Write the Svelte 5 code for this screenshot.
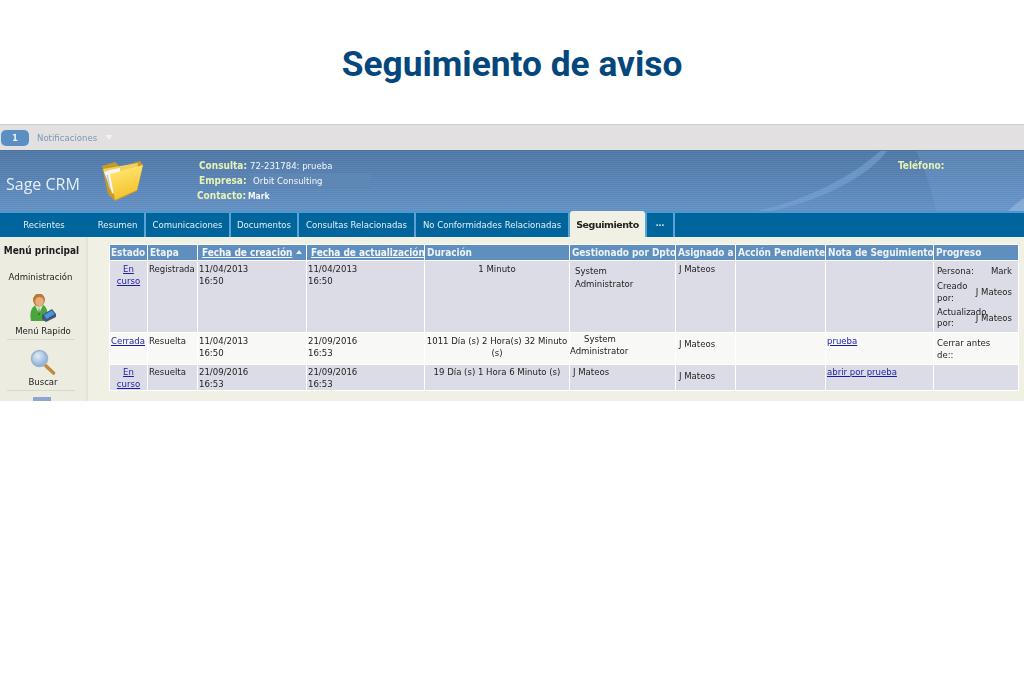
<script>
  const tabs = ['Resumen','Comunicaciones','Documentos','Consultas Relacionadas','No Conformidades Relacionadas'];
  const tabWidths = [53,83,66,115,152];
</script>

<div class="page">
  <h1>Seguimiento de aviso</h1>
  <div class="crm">
    <div class="notif">
      <span class="badge">1</span>
      <span class="nlabel">Notificaciones</span>
      <span class="caret"></span>
    </div>
    <header>
      <svg class="swoosh" viewBox="0 0 1024 61" preserveAspectRatio="none" aria-hidden="true">
        <path d="M880 0 C850 28 805 50 757 61 L772 61 C822 50 868 26 887 0 Z" fill="#7ba5d6" opacity=".55"/>
        <path d="M916 0 C926 20 932 42 936 61 L1024 61 L1024 0 Z" fill="#7ba5d6" opacity=".28"/>
        <path d="M1008 61 C1014 55 1019 51 1024 48 L1024 61 Z" fill="#a8c6e8" opacity=".45"/>
      </svg>
      <div class="brand">Sage CRM</div>
      <svg class="folder" viewBox="0 0 44 42" aria-hidden="true">
        <defs>
          <linearGradient id="fy" x1="0.3" y1="0" x2="0.6" y2="1">
            <stop offset="0" stop-color="#ffe878"/>
            <stop offset="1" stop-color="#f5be22"/>
          </linearGradient>
        </defs>
        <path d="M2 6 L15 2 L20 7 L40 1 L43 5 L37 31 L15 41 L8 34 Z" fill="#c79a28"/>
        <path d="M3 9 L38 3 L36 20 L12 34 Z" fill="#f0d060"/>
        <path d="M4 12 L10 10 L20 8 L20 20 L13 34 Z" fill="#f6f6f0"/>
        <path d="M7 15 L10 28" stroke="#c8ccd6" stroke-width="1.5" fill="none"/>
        <path d="M10 14 L43 5 L37 30 L15 40 Z" fill="url(#fy)"/>
      </svg>
      <div class="info">
        <div class="line"><b>Consulta:</b><span>72-231784: prueba</span></div>
        <div class="line"><b>Empresa:</b><span class="shade">Orbit Consulting</span></div>
        <div class="line l3"><b>Contacto:</b><span class="small">Mark</span></div>
      </div>
      <b class="phone">Teléfono:</b>
    </header>
    <nav>
      <div class="tab recent">Recientes</div>
      <div class="tabset">
        {#each tabs as t, i}
          <div class="tab" style="width:{tabWidths[i]}px">{t}</div>
        {/each}
        <div class="tab active">Seguimiento</div>
        <div class="tab more">•••</div>
        <div class="tab rest"></div>
      </div>
    </nav>
    <div class="body">
      <aside>
        <div class="mtitle">Menú principal</div>
        <div class="admin">Administración</div>
        <svg class="ic person" viewBox="0 0 28 28" aria-hidden="true">
          <path d="M3 27 C1 17 4 11 11 10 C18 10 20 15 20 27 Z" fill="#4aa53a"/>
          <path d="M7 11 L11 20 L15 11 Z" fill="#d8e8c8"/>
          <path d="M11 13 L12 21 L10 21 Z" fill="#2f7d2a"/>
          <ellipse cx="11" cy="6" rx="6" ry="6.5" fill="#b9783a"/>
          <ellipse cx="11.5" cy="7.5" rx="4.3" ry="4.6" fill="#e6ad7e"/>
          <path d="M14 21 L24 15 L28 20 L28 23 L18 28 L14 25 Z" fill="#4a5670"/>
          <path d="M16 21 L24 16.5 L26.5 20 L18.5 25 Z" fill="#3f9be2"/>
        </svg>
        <div class="mi">Menú Rapido</div>
        <hr />
        <svg class="ic lens" viewBox="0 0 26 26" aria-hidden="true">
          <defs>
            <radialGradient id="gl" cx=".4" cy=".35" r=".7">
              <stop offset="0" stop-color="#e2eefa"/>
              <stop offset="1" stop-color="#7fa8d4"/>
            </radialGradient>
          </defs>
          <path d="M15 16 L23.5 24" stroke="#c38a3e" stroke-width="3.6" stroke-linecap="round"/>
          <circle cx="9.5" cy="9.5" r="8" fill="url(#gl)" stroke="#9fb2c8" stroke-width="1.6"/>
        </svg>
        <div class="mi b">Buscar</div>
        <hr />
        <div class="cut"></div>
      </aside>
      <main>
        <table>
          <colgroup>
            <col style="width:37px"/><col style="width:49px"/><col style="width:108px"/><col style="width:117px"/>
            <col style="width:144px"/><col style="width:105px"/><col style="width:59px"/><col style="width:89px"/>
            <col style="width:107px"/><col style="width:84px"/>
          </colgroup>
          <thead>
            <tr>
              <th class="first">Estado</th><th>Etapa</th>
              <th class="sort"><u>Fecha de creación</u> <span class="up"></span></th>
              <th class="sort"><u>Fecha de actualización</u></th>
              <th>Duración</th><th>Gestionado por Dpto</th><th>Asignado a</th><th>Acción Pendiente</th><th>Nota de Seguimiento</th><th>Progreso</th>
            </tr>
          </thead>
          <tbody>
            <tr class="r1 odd">
              <td class="c"><a href="#a">En curso</a></td>
              <td>Registrada</td>
              <td>11/04/2013<br/>16:50</td>
              <td>11/04/2013<br/>16:50</td>
              <td class="c">1 Minuto</td>
              <td class="indent">System Administrator</td>
              <td class="ind1">J Mateos</td>
              <td></td><td></td>
              <td class="prog">
                <div class="pr"><span>Persona:</span><span>Mark</span></div>
                <div class="pr"><span class="lb">Creado por:</span><span>J Mateos</span></div>
                <div class="pr tight"><span class="lb">Actualizado por:</span><span>J Mateos</span></div>
              </td>
            </tr>
            <tr class="r2">
              <td><a href="#a">Cerrada</a></td>
              <td>Resuelta</td>
              <td>11/04/2013<br/>16:50</td>
              <td>21/09/2016<br/>16:53</td>
              <td class="c">1011 Día (s) 2 Hora(s) 32 Minuto (s)</td>
              <td class="sys">System<br/>Administrator</td>
              <td class="mid">J Mateos</td>
              <td></td>
              <td><a href="#a">prueba</a></td>
              <td class="prog2">Cerrar antes de::</td>
            </tr>
            <tr class="r3 odd">
              <td class="c"><a href="#a">En curso</a></td>
              <td>Resuelta</td>
              <td>21/09/2016<br/>16:53</td>
              <td>21/09/2016<br/>16:53</td>
              <td class="c">19 Día (s) 1 Hora 6 Minuto (s)</td>
              <td class="ind1">J Mateos</td>
              <td class="mid">J Mateos</td>
              <td></td>
              <td><a href="#a">abrir por prueba</a></td>
              <td></td>
            </tr>
          </tbody>
        </table>
      </main>
    </div>
  </div>
</div>

<style>
  :global(body) { margin: 0; background: #fff; }
  .page { width: 1024px; height: 696px; overflow: hidden; background: #fff; }
  h1 {
    margin: 0; height: 124px; box-sizing: border-box; padding-top: 42px;
    text-align: center; font: 700 35.3px/44px Roboto, sans-serif; color: #04477c;
  }
  .crm { height: 277px; overflow: hidden; font-family: "DejaVu Sans Condensed", "DejaVu Sans", sans-serif; font-size: 9.5px; color: #222; filter: blur(.3px); }
  .notif {
    height: 26px; box-sizing: border-box; background: #e2e0e0; border-top: 1px solid #cfcccc;
    display: flex; align-items: center; padding-left: 1px;
  }
  .badge {
    width: 28px; height: 16px; border-radius: 5px; background: #5b8ec2; color: #e8f0f8;
    text-align: center; font-weight: 700; font-size: 9.5px; line-height: 16px;
  }
  .nlabel { margin-left: 8px; color: #7b98b8; font-size: 9.5px; }
  .caret { margin-left: 8px; border: 4px solid transparent; border-top: 5px solid #f2f2f2; border-bottom: 0; }
  header {
    position: relative; height: 61px; display: flex; overflow: hidden;
    background:
      repeating-linear-gradient(180deg, rgba(255,255,255,.05) 0 1px, rgba(0,0,0,.02) 1px 2px),
      linear-gradient(180deg, #4f77a5 0%, #5a86b8 60%, #6491c5 100%);
    border-top: 1px solid #4d749e; box-sizing: border-box;
  }
  .swoosh { position: absolute; inset: 0; width: 100%; height: 100%; }
  .brand { position: relative; width: 100px; flex: none; padding: 24px 0 0 6px; box-sizing: border-box; color: #e6eef6; font: 16px/18px "Open Sans", sans-serif; }
  .folder { position: relative; width: 44px; height: 42px; margin-top: 9px; flex: none; }
  .info { position: relative; margin-left: 55px; padding-top: 7px; width: 180px; }
  .line { display: flex; align-items: center; height: 15px; }
  .line b { flex: none; color: #e8f2b4; font-size: 10px; width: 47px; text-align: right; white-space: nowrap; }
  .line span { margin-left: 4px; color: #f4f6fa; white-space: nowrap; }
  .l3 { margin-left: -2px; }
  .shade { background: #5f87b5; width: 118px; padding: 2px 0 2px 3px; flex: none; }
  .small { font-weight: 700; font-size: 8.5px; }
  .phone { position: absolute; left: 898px; top: 8px; color: #e8f2b4; font-size: 10px; line-height: 14px; }
  nav { height: 26px; display: flex; background: #00659d; border-top: 2px solid #4a9ad2; box-sizing: border-box; }
  .tab {
    height: 24px; box-sizing: border-box; background: #00659d; color: #e8eef4;
    text-align: center; line-height: 24px; white-space: nowrap; flex: none; font-size: 9.5px;
  }
  .recent { width: 88px; }
  .tabset { display: flex; gap: 2px; margin-left: 3px; flex: 1; background: #5aa3d6; }
  .tabset .active {
    width: 75px; height: 26px; margin-top: -2px; padding-top: 1px; background: #f0f0e4; color: #222; font-weight: 700;
    border-radius: 3px 3px 0 0; line-height: 26px; font-family: "DejaVu Sans", sans-serif; font-size: 9.5px; letter-spacing: -.45px;
  }
  .tabset .more { width: 26px; font-size: 5px; font-weight: 700; }
  .tabset .rest { flex: 1; }
  .body { display: flex; height: 164px; background: #f0f0e4; }
  aside { width: 88px; flex: none; box-sizing: border-box; background: #edece0; border-right: 2px solid #e4e3d6; display: flex; flex-direction: column; align-items: center; }
  .mtitle { font-weight: 700; font-size: 10px; color: #1c1c1c; margin-top: 7px; line-height: 14px; margin-right: 3px; }
  .admin { margin-top: 12px; line-height: 14px; margin-right: 5px; }
  .ic { display: block; flex: none; }
  .person { width: 28px; height: 28px; margin-top: 10px; margin-left: -2px; }
  .lens { width: 26px; height: 26px; margin-top: 9px; margin-left: -1px; }
  .mi { line-height: 12px; margin-top: 3px; }
  .mi.b { margin-top: 1px; }
  hr { width: 68px; border: 0; border-top: 1px solid #d8d7ca; margin: 2px 5px 0 0; }
  .cut { width: 18px; height: 14px; background: #8ea6d4; margin-top: 6px; margin-right: 2px; flex: none; }
  main { flex: 1; padding: 7px 0 0 21px; min-width: 0; }
  table { table-layout: fixed; width: 910px; border-collapse: separate; border-spacing: 1px; background: #fff; }
  th {
    height: 15px; box-sizing: border-box; padding: 0 0 0 2px; background: #5f8fbf; color: #eef2f6; text-align: left; white-space: nowrap; overflow: hidden;
    font-size: 10px; font-weight: 700; line-height: 14px; letter-spacing: -.06px;
  }
  th.first { padding-left: 1px; }
  th.sort { padding-left: 4px; }
  th u { color: #f4f6f8; }
  .up { display: inline-block; border: 3px solid transparent; border-bottom: 4px solid #e8eef4; border-top: 0; vertical-align: 2px; margin-left: 1px; }
  td { box-sizing: border-box; vertical-align: top; padding: 1px 1px 0 1px; line-height: 12px; background: #f8f8f6; overflow: hidden; }
  .odd td { background: #dcdce6; }
  .r1 td { height: 71px; padding-top: 2px; }
  .r2 td { height: 31px; padding-top: 2px; }
  .r3 td { height: 25px; padding-top: 1px; }
  td.c { text-align: center; }
  a { color: #1c1ca8; }
  td.indent { padding-left: 5px; padding-right: 20px; padding-top: 3px; line-height: 13px; }
  td.ind1 { padding-left: 3px; }
  .r2 td.mid, .r3 td.mid { padding: 5px 0 0 3px; }
  .r2 td.sys { padding: 0; text-indent: 14px; }
  .r1 td.prog { padding: 4px 6px 0 3px; }
  .pr { display: flex; justify-content: space-between; align-items: center; margin-bottom: 3px; }
  .lb { width: 34px; }
  .tight { margin-top: -1px; line-height: 11px; }
  .r2 td.prog2 { padding: 4px 14px 0 3px; }
</style>
